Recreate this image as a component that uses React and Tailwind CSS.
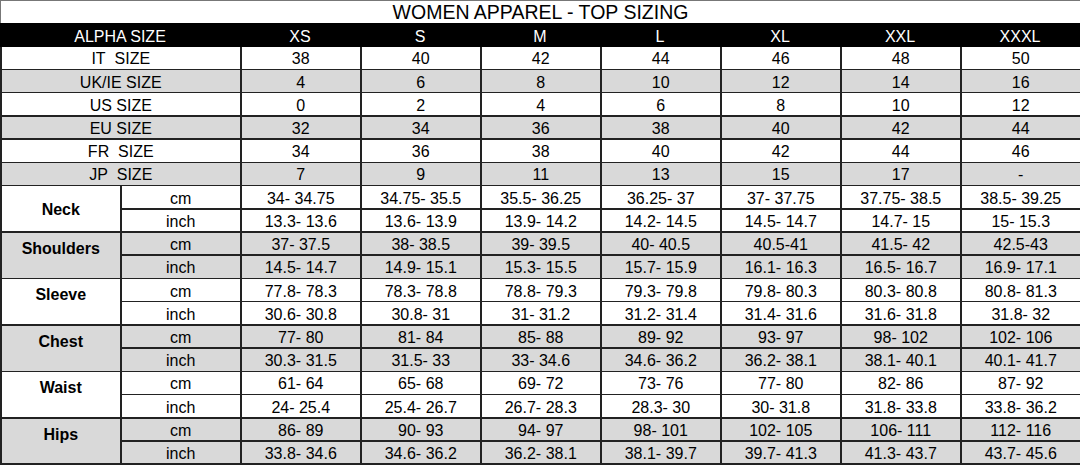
import React from 'react'

const sizes = ['XS', 'S', 'M', 'L', 'XL', 'XXL', 'XXXL']

const sizeRows = [
  { label: 'IT\u00a0 SIZE', values: ['38', '40', '42', '44', '46', '48', '50'] },
  { label: 'UK/IE SIZE', values: ['4', '6', '8', '10', '12', '14', '16'], gray: true },
  { label: 'US SIZE', values: ['0', '2', '4', '6', '8', '10', '12'] },
  { label: 'EU SIZE', values: ['32', '34', '36', '38', '40', '42', '44'], gray: true },
  { label: 'FR\u00a0 SIZE', values: ['34', '36', '38', '40', '42', '44', '46'] },
  { label: 'JP\u00a0 SIZE', values: ['7', '9', '11', '13', '15', '17', '-'], gray: true },
]

const measures = [
  {
    name: 'Neck',
    center: true,
    cm: ['34- 34.75', '34.75- 35.5', '35.5- 36.25', '36.25- 37', '37- 37.75', '37.75- 38.5', '38.5- 39.25'],
    inch: ['13.3- 13.6', '13.6- 13.9', '13.9- 14.2', '14.2- 14.5', '14.5- 14.7', '14.7- 15', '15- 15.3'],
  },
  {
    name: 'Shoulders',
    gray: true,
    cm: ['37- 37.5', '38- 38.5', '39- 39.5', '40- 40.5', '40.5-41', '41.5- 42', '42.5-43'],
    inch: ['14.5- 14.7', '14.9- 15.1', '15.3- 15.5', '15.7- 15.9', '16.1- 16.3', '16.5- 16.7', '16.9- 17.1'],
  },
  {
    name: 'Sleeve',
    cm: ['77.8- 78.3', '78.3- 78.8', '78.8- 79.3', '79.3- 79.8', '79.8- 80.3', '80.3- 80.8', '80.8- 81.3'],
    inch: ['30.6- 30.8', '30.8- 31', '31- 31.2', '31.2- 31.4', '31.4- 31.6', '31.6- 31.8', '31.8- 32'],
  },
  {
    name: 'Chest',
    gray: true,
    cm: ['77- 80', '81- 84', '85- 88', '89- 92', '93- 97', '98- 102', '102- 106'],
    inch: ['30.3- 31.5', '31.5- 33', '33- 34.6', '34.6- 36.2', '36.2- 38.1', '38.1- 40.1', '40.1- 41.7'],
  },
  {
    name: 'Waist',
    cm: ['61- 64', '65- 68', '69- 72', '73- 76', '77- 80', '82- 86', '87- 92'],
    inch: ['24- 25.4', '25.4- 26.7', '26.7- 28.3', '28.3- 30', '30- 31.8', '31.8- 33.8', '33.8- 36.2'],
  },
  {
    name: 'Hips',
    gray: true,
    cm: ['86- 89', '90- 93', '94- 97', '98- 101', '102- 105', '106- 111', '112- 116'],
    inch: ['33.8- 34.6', '34.6- 36.2', '36.2- 38.1', '38.1- 39.7', '39.7- 41.3', '41.3- 43.7', '43.7- 45.6'],
  },
]

function Cell({ children, gray, className = 'items-center pt-[3px]' }) {
  return (
    <div className={`flex justify-center ${gray ? 'bg-[#d9d9d9]' : 'bg-white'} ${className}`}>
      {children}
    </div>
  )
}

export default function App() {
  return (
    <div
      className="w-[1080px] h-[465px] flex flex-col bg-white text-black text-[16px] leading-none"
      style={{ fontFamily: '"Liberation Sans", Arial, sans-serif' }}
    >
      <div className="h-[23px] flex items-center justify-center pt-[2px] border-t border-l border-[#777] text-[19.5px]">
        WOMEN APPAREL - TOP SIZING
      </div>

      <div className="h-[24px] pt-[3px] bg-black text-white grid grid-cols-[240px_repeat(7,1fr)] items-center text-center">
        <div>ALPHA SIZE</div>
        {sizes.map(s => <div key={s}>{s}</div>)}
      </div>

      <div className="flex-1 grid grid-cols-9 grid-rows-[repeat(18,1fr)] gap-[1.5px] bg-[#222] pl-[1.5px] pb-[1.5px]">
        {sizeRows.map(r => (
          <React.Fragment key={r.label}>
            <Cell gray={r.gray} className="col-span-2 items-center pt-[3px]">{r.label}</Cell>
            {r.values.map((v, i) => <Cell key={i} gray={r.gray}>{v}</Cell>)}
          </React.Fragment>
        ))}
        {measures.map(m => (
          <React.Fragment key={m.name}>
            <Cell
              gray={m.gray}
              className={`row-span-2 font-bold ${m.center ? 'items-center pt-[3px]' : 'items-start pt-[8px]'}`}
            >
              {m.name}
            </Cell>
            <Cell gray={m.gray}>cm</Cell>
            {m.cm.map((v, i) => <Cell key={i} gray={m.gray}>{v}</Cell>)}
            <Cell gray={m.gray}>inch</Cell>
            {m.inch.map((v, i) => <Cell key={i} gray={m.gray}>{v}</Cell>)}
          </React.Fragment>
        ))}
      </div>
    </div>
  )
}
